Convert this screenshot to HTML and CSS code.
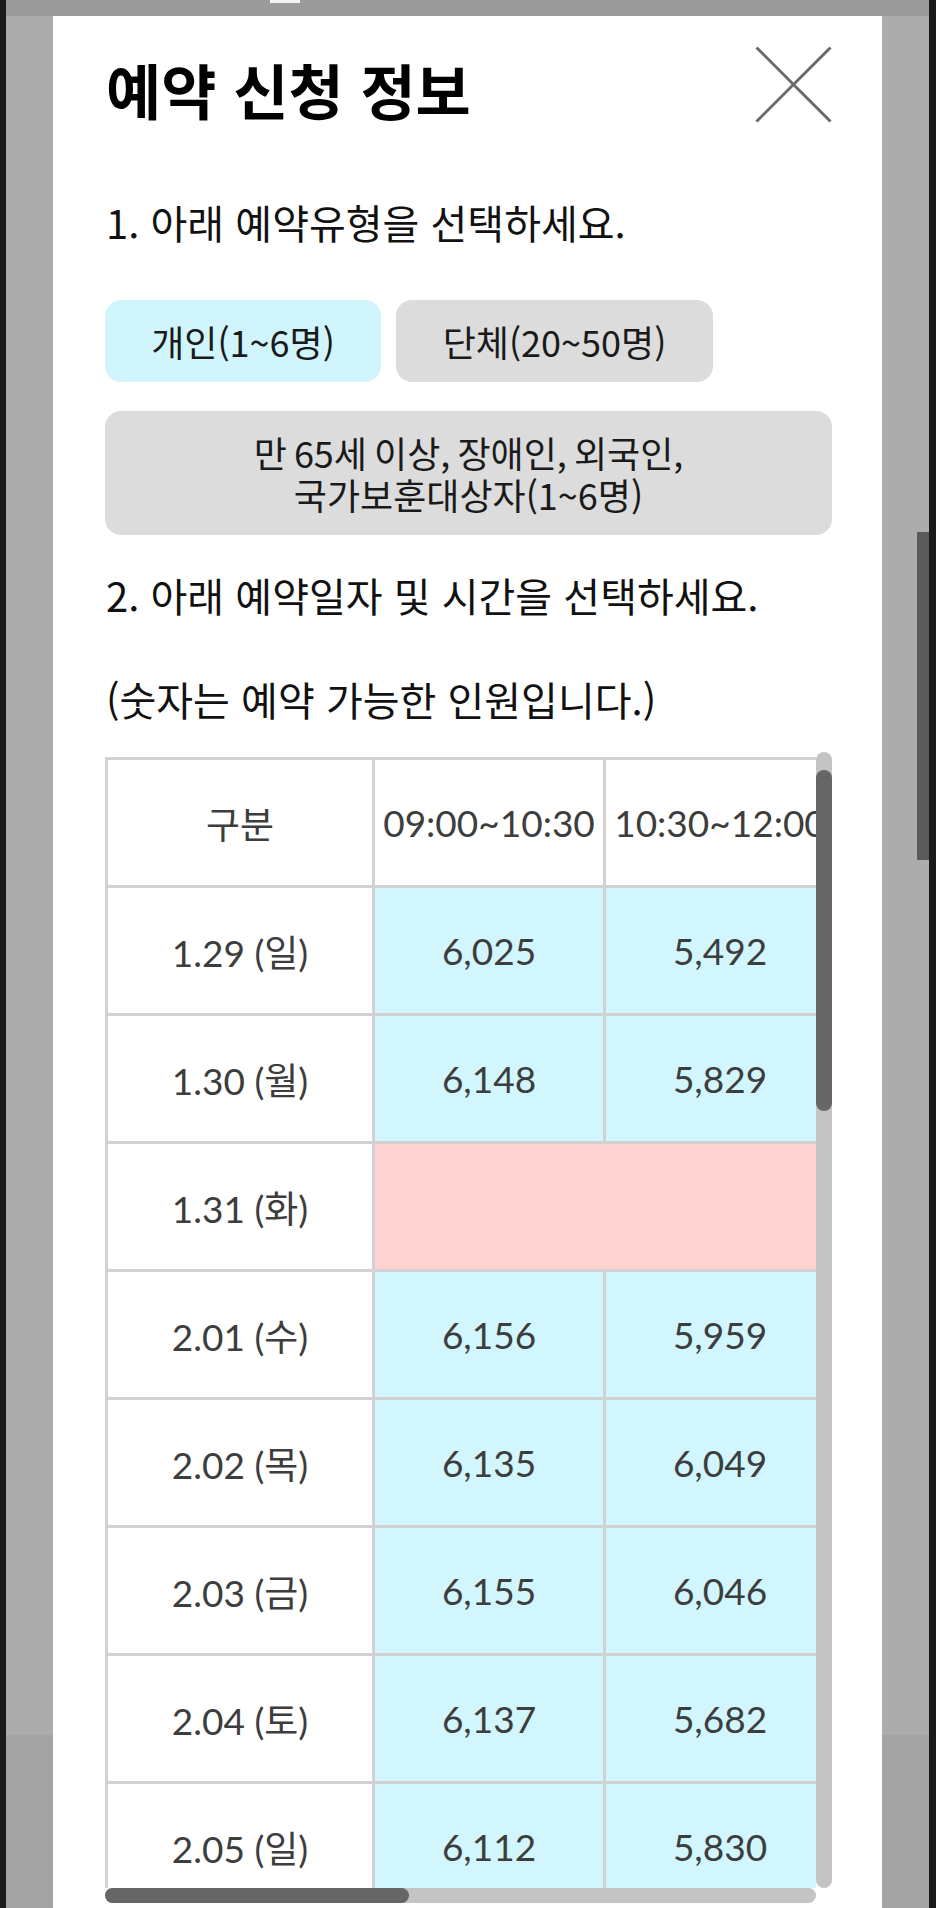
FILE: index.html
```html
<!DOCTYPE html>
<html lang="ko">
  <head>
    <meta charset="utf-8">
    <title>예약 신청 정보</title>
    <link rel="stylesheet" href="styles.css">
  </head>
  <body>
    <div class="topbar"><span class="tab-mark"></span></div>
    <div class="stage">
      <div class="modal">
        <div class="modal-head">
          <h2>예약 신청 정보</h2>
          <button type="button" class="close" aria-label="닫기">
            <svg width="77" height="77" viewBox="0 0 77 77">
              <line x1="1.5" y1="1.5" x2="75.5" y2="75.5" />
              <line x1="75.5" y1="1.5" x2="1.5" y2="75.5" />
            </svg>
          </button>
        </div>

        <p class="step">1. 아래 예약유형을 선택하세요.</p>
        <div class="types">
          <button type="button" class="type on">개인(1~6명)</button>
          <button type="button" class="type">단체(20~50명)</button>
          <button type="button" class="type wide">만 65세 이상, 장애인, 외국인,<br>국가보훈대상자(1~6명)</button>
        </div>

        <p class="step step-2">2. 아래 예약일자 및 시간을 선택하세요.</p>
        <p class="step step-note">(숫자는 예약 가능한 인원입니다.)</p>

        <div class="table-box">
          <div class="table-view">
            <table class="slots">
              <colgroup>
                <col class="c-day">
                <col class="c-time"><col class="c-time"><col class="c-time">
                <col class="c-time"><col class="c-time"><col class="c-time">
              </colgroup>
              <tr class="head">
                <td>구분</td><td>09:00~10:30</td><td>10:30~12:00</td><td>12:00~13:30</td><td>13:30~15:00</td><td>15:00~16:30</td><td>16:30~18:00</td>
              </tr>
              <tr><td>1.29 (일)</td><td class="open">6,025</td><td class="open">5,492</td><td class="open">4,871</td><td class="open">5,106</td><td class="open">5,733</td><td class="open">6,210</td></tr>
              <tr><td>1.30 (월)</td><td class="open">6,148</td><td class="open">5,829</td><td class="open">5,320</td><td class="open">5,611</td><td class="open">5,987</td><td class="open">6,302</td></tr>
              <tr><td>1.31 (화)</td><td class="closed" colspan="6"></td></tr>
              <tr><td>2.01 (수)</td><td class="open">6,156</td><td class="open">5,959</td><td class="open">5,602</td><td class="open">5,744</td><td class="open">6,031</td><td class="open">6,318</td></tr>
              <tr><td>2.02 (목)</td><td class="open">6,135</td><td class="open">6,049</td><td class="open">5,688</td><td class="open">5,802</td><td class="open">6,077</td><td class="open">6,325</td></tr>
              <tr><td>2.03 (금)</td><td class="open">6,155</td><td class="open">6,046</td><td class="open">5,713</td><td class="open">5,790</td><td class="open">6,064</td><td class="open">6,331</td></tr>
              <tr><td>2.04 (토)</td><td class="open">6,137</td><td class="open">5,682</td><td class="open">5,204</td><td class="open">5,389</td><td class="open">5,861</td><td class="open">6,244</td></tr>
              <tr><td>2.05 (일)</td><td class="open">6,112</td><td class="open">5,830</td><td class="open">5,377</td><td class="open">5,498</td><td class="open">5,912</td><td class="open">6,267</td></tr>
              <tr><td>2.06 (월)</td><td class="open">6,201</td><td class="open">6,088</td><td class="open">5,802</td><td class="open">5,917</td><td class="open">6,120</td><td class="open">6,340</td></tr>
            </table>
          </div>
          <div class="vbar"><div class="vthumb"></div></div>
          <div class="hbar"><div class="hthumb"></div></div>
        </div>
      </div>
      <div class="page-scroll"><div class="page-thumb"></div></div>
    </div>
  </body>
</html>
```

FILE: styles.css
```css
html, body {
margin: 0;
padding: 0;
}
body {
height: 1908px;
overflow: hidden;
border-left: 6px solid #1a1a1a;
border-right: 7px solid #1a1a1a;
background: linear-gradient(to bottom, #acacac 1735px, #a4a4a4 1735px);
font-family: "Noto Sans CJK KR", "Noto Sans", sans-serif;
color: #111;
}
.topbar {
height: 16px;
background: #9b9b9b;
}
.tab-mark {
display: block;
width: 30px;
height: 3px;
margin-left: 264px;
background: #f4f4f4;
}
.stage {
display: flex;
height: 1892px;
padding-left: 47px;
}
.modal {
width: 829px;
box-sizing: border-box;
padding: 30px 50px 0 52px;
background: #fff;
overflow: hidden;
}
.page-scroll {
width: 12px;
margin-left: 35px;
}
.page-thumb {
height: 328px;
margin-top: 516px;
background: #5a5a5a;
}

.modal-head {
display: flex;
justify-content: space-between;
align-items: flex-start;
}
h2 {
margin: 5px 0 0 1px;
font-size: 60px;
line-height: 76px;
font-weight: 700;
color: #000;
}
.close {
width: 77px;
height: 77px;
padding: 0;
border: none;
background: none;
}
.close svg {
display: block;
}
.close line {
stroke: #6a6a6a;
stroke-width: 3;
}

.step {
margin: 67px 0 0 1px;
font-size: 40px;
line-height: 56px;
}
.step-2 {
margin-top: 32px;
}
.step-note {
margin-top: 48px;
}

.types {
display: flex;
flex-wrap: wrap;
gap: 29px 15px;
margin-top: 50px;
}
.type {
padding: 20px 0;
width: 276px;
border: none;
border-radius: 16px;
background: #dcdcdc;
font-family: "Noto Sans CJK KR", "Noto Sans", sans-serif;
font-size: 36px;
line-height: 42px;
color: #1a1a1a;
}
.type + .type {
width: 317px;
}
.type.on {
background: #d1f5fc;
}
.type.wide {
width: 100%;
word-spacing: -3px;
}

.table-box {
display: grid;
grid-template-columns: 711px 16px;
grid-template-rows: 1136px 15px;
margin-top: 25px;
}
.table-view {
overflow: hidden;
padding-top: 5px;
}
.vbar {
padding-top: 18px;
border-radius: 8px;
background: #c4c4c4;
}
.vthumb {
height: 341px;
border-radius: 8px;
background: #666;
}
.hbar {
border-radius: 8px;
background: #c4c4c4;
}
.hthumb {
width: 304px;
height: 100%;
border-radius: 8px;
background: #666;
}

.slots {
table-layout: fixed;
width: 1656px;
border-collapse: separate;
border-spacing: 0;
border-top: 3px solid #d2d2d2;
border-left: 3px solid #d2d2d2;
font-family: Lato, "Noto Sans CJK KR", sans-serif;
font-size: 37px;
font-weight: 400;
color: #3d3d3d;
}
.c-day {
width: 267px;
}
.c-time {
width: 231px;
}
.slots tr {
height: 128px;
}
.slots td {
padding: 0;
border-right: 3px solid #d2d2d2;
border-bottom: 3px solid #d2d2d2;
text-align: center;
vertical-align: middle;
white-space: nowrap;
}
.slots .open {
background: #d1f6fd;
}
.slots .closed {
background: #ffd2d2;
}
```
